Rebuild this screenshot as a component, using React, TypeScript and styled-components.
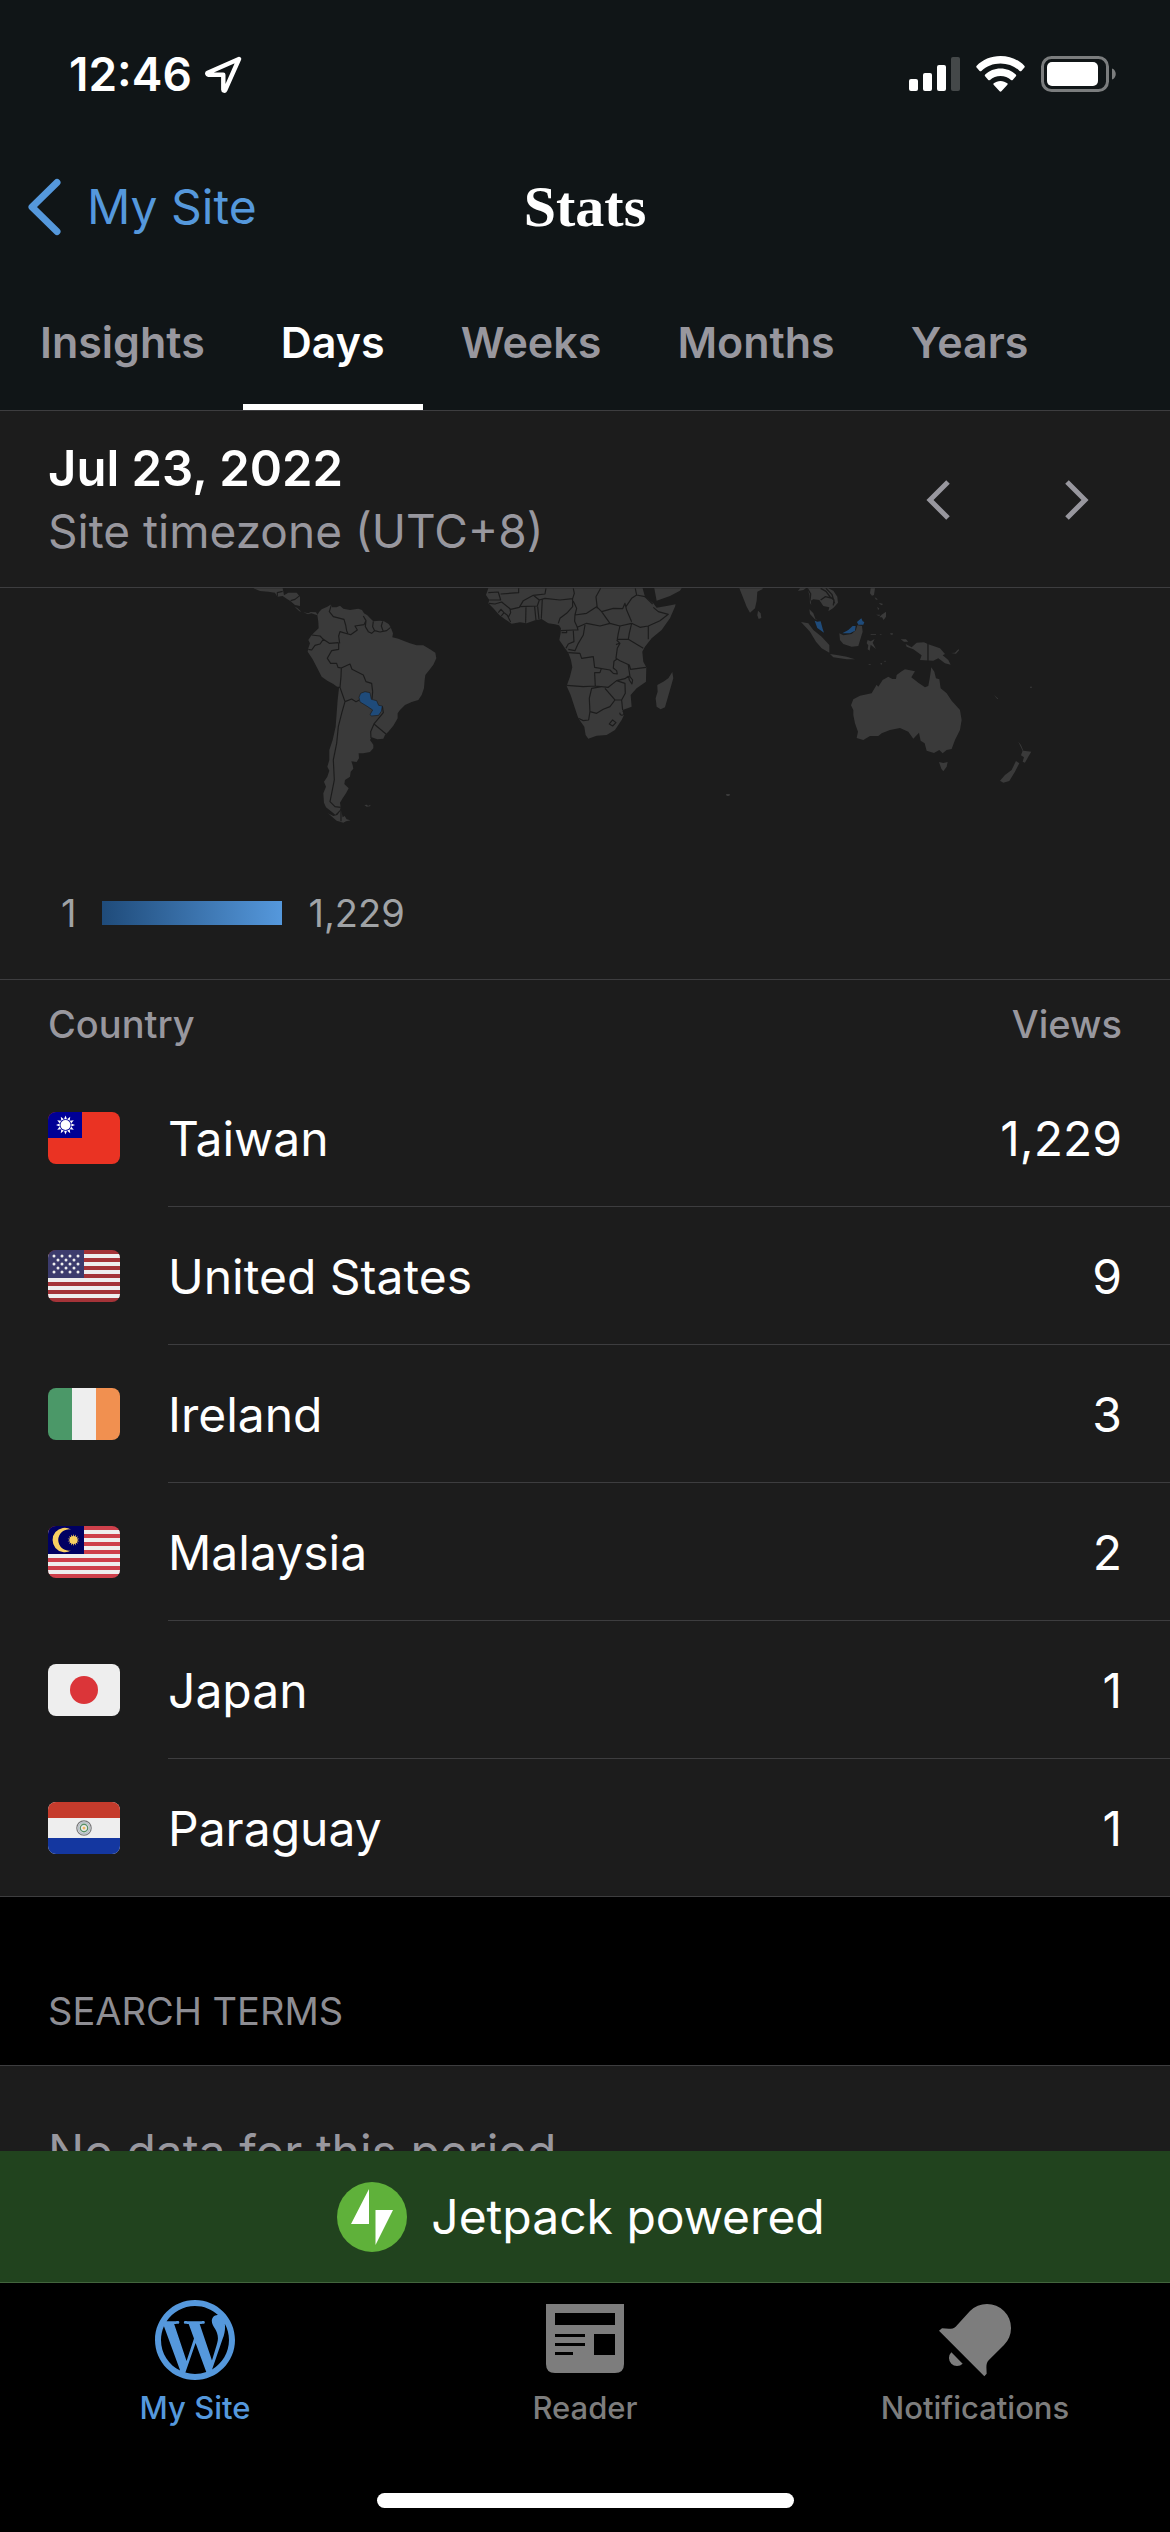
import React from "react";
import styled, { createGlobalStyle } from "styled-components";

const color = {
  header: "#101517",
  surface: "#1c1c1c",
  line: "#3d3d3f",
  muted: "#98979e",
  legend: "#a0a3a6",
  accent: "#5598dc",
  low: "#1f4b7a",
  land: "#3a3a3a",
  inactive: "#7d7d7d",
};

const GlobalStyle = createGlobalStyle`
  * { box-sizing: border-box; }
  body { margin: 0; background: #000; }
  button { font: inherit; color: inherit; background: none; border: 0; padding: 0; cursor: pointer; }
  a { color: inherit; text-decoration: none; }
  svg { display: block; flex: none; }
`;

const Screen = styled.div`
  display: flex;
  flex-direction: column;
  height: 100vh;
  background: #000;
  color: #fff;
  font-family: Inter, "Liberation Sans", sans-serif;
  font-size: 48px;
  line-height: 62px;
`;

const Header = styled.header`
  background: ${color.header};
  border-bottom: 1px solid ${color.line};
`;

const StatusBar = styled.div`
  display: flex;
  align-items: center;
  justify-content: space-between;
  padding: 43px 54px 36px 69px;
  font-size: 46px;
  font-weight: 600;
`;

const StatusGroup = styled.div<{ $gap: number }>`
  display: flex;
  align-items: center;
  gap: ${(p) => p.$gap}px;
`;

const NavBar = styled.div`
  display: grid;
  grid-template-columns: 1fr auto 1fr;
  align-items: center;
  height: 132px;
  padding: 0 27px;
`;

const BackLink = styled.a`
  display: flex;
  align-items: center;
  gap: 24px;
  color: ${color.accent};
`;

const Title = styled.h1`
  margin: 0;
  font: 700 58px/62px "Liberation Serif", serif;
`;

const Tabs = styled.nav`
  display: flex;
  padding-left: 2px;
`;

const Tab = styled.button<{ $active?: boolean }>`
  height: 137px;
  padding: 0 38px;
  font-size: 43px;
  font-weight: 600;
  color: ${(p) => (p.$active ? "#fff" : color.muted)};
  box-shadow: ${(p) => (p.$active ? "inset 0 -6px #fff" : "none")};
`;

const DateBar = styled.section`
  display: flex;
  align-items: center;
  justify-content: space-between;
  padding: 27px 81px 25px 48px;
  background: ${color.surface};
  border-bottom: 1px solid ${color.line};
`;

const DateText = styled.h2`
  margin: 0;
  font-size: 49px;
  line-height: 62px;
  font-weight: 600;
`;

const Note = styled.p<{ $large?: boolean }>`
  margin: 0;
  font-size: ${(p) => (p.$large ? 48 : 46)}px;
  color: ${color.muted};
`;

const Pager = styled.div`
  display: flex;
  gap: 115px;
`;

const Content = styled.main`
  flex: 1;
  min-height: 0;
  overflow-y: auto;
  scrollbar-width: none;
`;

const MapPanel = styled.section`
  background: ${color.surface};
  border-bottom: 1px solid ${color.line};
`;

const WorldMap = styled.svg`
  width: 100%;
  height: auto;
`;

const Legend = styled.div`
  display: flex;
  align-items: center;
  gap: 26px;
  padding: 0 61px 41px;
  font-size: 38px;
  line-height: 50px;
  color: ${color.legend};
`;

const LegendScale = styled.div`
  width: 180px;
  height: 24px;
  background: linear-gradient(90deg, ${color.low}, ${color.accent});
`;

const CountryTable = styled.table`
  width: 100%;
  border-spacing: 0;
  background: ${color.surface};
  border-bottom: 1px solid ${color.line};

  tbody tr:last-child td { border-bottom: 0; height: 137px; }
`;

const HeadCell = styled.th<{ $end?: boolean }>`
  height: 89px;
  padding: 0 48px 2px;
  font-size: 38px;
  font-weight: 500;
  text-align: ${(p) => (p.$end ? "right" : "left")};
  color: ${color.muted};
`;

const FlagCell = styled.td`
  width: 168px;
  padding: 0 48px;
`;

const Cell = styled.td<{ $end?: boolean }>`
  height: 138px;
  padding: 2px ${(p) => (p.$end ? 48 : 0)}px 0 0;
  border-bottom: 1px solid ${color.line};
  text-align: ${(p) => (p.$end ? "right" : "left")};
`;

const FlagFrame = styled.svg`
  width: 72px;
  height: 52px;
  border-radius: 8px;
`;

const SectionTitle = styled.h2`
  margin: 0;
  padding: 89px 48px 29px;
  font-size: 38px;
  line-height: 50px;
  font-weight: 400;
  color: #8d8d93;
`;

const EmptyPanel = styled.section`
  padding: 55px 48px;
  background: ${color.surface};
  border-top: 1px solid ${color.line};
`;

const Banner = styled.button`
  display: flex;
  align-items: center;
  justify-content: center;
  gap: 24px;
  width: 100%;
  height: 132px;
  padding-right: 8px;
  background: #21431e;
  border-bottom: 1px solid #42643d;
`;

const BottomBar = styled.footer`
  padding-bottom: 24px;
  background: #000;
`;

const BottomTabs = styled.nav`
  display: grid;
  grid-template-columns: repeat(3, 1fr);
  padding: 17px 0 67px;
`;

const BottomTab = styled.a<{ $active?: boolean }>`
  display: flex;
  flex-direction: column;
  align-items: center;
  gap: 10px;
  font-size: 31px;
  line-height: 36px;
  font-weight: 500;
  color: ${(p) => (p.$active ? color.accent : color.inactive)};
`;

const HomeIndicator = styled.div`
  width: 417px;
  height: 15px;
  margin: 0 auto;
  border-radius: 8px;
  background: #fff;
`;

const LocationIcon = () => (
  <svg width="37" height="37" viewBox="0 0 37 37" fill="none" stroke="#fff" strokeWidth="4.400" strokeLinejoin="round">
    <path d="M34 3 2.800 16.800a1 1 0 0 0 .4 1.900L18.300 18.700v15a1 1 0 0 0 1.900.4Z" />
  </svg>
);

const SignalIcon = () => (
  <svg width="51" height="36" viewBox="0 0 51 36" fill="#fff">
    <rect x="0" y="23" width="9" height="12" rx="2" />
    <rect x="14" y="17" width="9" height="18" rx="2" />
    <rect x="28" y="9" width="9" height="26" rx="2" />
    <rect x="42" y="1" width="9" height="34" rx="2" opacity=".22" />
  </svg>
);

const WifiIcon = () => (
  <svg width="49" height="36" viewBox="0 0 49 36" fill="#fff">
    <path d="M24.500 0C34 0 42.500 3.700 48.300 9.700c.6.6.6 1.200.1 1.800l-3 3.400c-.5.5-1.200.5-1.800 0C38.500 10.200 32 7.500 24.500 7.500S10.500 10.200 5.400 14.900c-.6.5-1.300.5-1.800 0l-3-3.400c-.5-.6-.5-1.200.1-1.800C6.500 3.700 15 0 24.500 0Z" />
    <path d="M24.500 12.500c6 0 11.300 2.300 15.300 6.100.6.5.6 1.200.1 1.700l-3.200 3.600c-.5.500-1.100.5-1.700 0-2.900-2.500-6.500-4-10.500-4s-7.600 1.500-10.500 4c-.6.5-1.200.5-1.700 0l-3.200-3.600c-.5-.5-.5-1.200.1-1.700 4-3.800 9.300-6.100 15.300-6.100Z" />
    <path d="M24.500 24.900c2.600 0 5 .9 6.800 2.400.5.400.5 1 .1 1.500l-6 6.500c-.5.600-1.300.6-1.800 0l-6-6.500c-.4-.5-.4-1.100.1-1.500 1.800-1.500 4.200-2.400 6.800-2.400Z" />
  </svg>
);

const BatteryIcon = () => (
  <svg width="75" height="36" viewBox="0 0 75 36">
    <rect x="1.500" y="1.500" width="65" height="33" rx="9" fill="none" stroke="#7b7d7e" strokeWidth="3" />
    <rect x="6" y="6" width="51" height="24" rx="5" fill="#fff" />
    <path d="M71 12.500c5 1.500 5 9.500 0 11Z" fill="#7b7d7e" />
  </svg>
);

const BackIcon = () => (
  <svg width="36" height="58" viewBox="0 0 36 58" fill="none" stroke="currentColor" strokeWidth="7" strokeLinecap="round" strokeLinejoin="round">
    <path d="M30 4.500 5 29 30 53.500" />
  </svg>
);

const PagerIcon = ({ next }: { next?: boolean }) => (
  <svg width="24" height="40" viewBox="0 0 24 40" fill="none" stroke={color.muted} strokeWidth="5">
    <path d={next ? "M2 2 20 20 2 38" : "M22 2 4 20 22 38"} />
  </svg>
);

const JetpackIcon = () => (
  <svg width="70" height="70" viewBox="0 0 70 70">
    <circle cx="35" cy="35" r="35" fill="#5fb13a" />
    <path d="M32 7v35H14ZM38.500 28H56L38.500 63Z" fill="#fff" />
  </svg>
);

const WordPressIcon = () => (
  <svg width="80" height="80" viewBox="2 2 20 20" fill="currentColor">
    <path d="M12 2C6.486 2 2 6.486 2 12s4.486 10 10 10 10-4.486 10-10S17.514 2 12 2zM3.500 12c0-1.232.264-2.402.736-3.460L8.290 19.650C5.456 18.272 3.500 15.365 3.500 12zm8.500 8.500c-.834 0-1.640-.120-2.400-.345l2.550-7.410 2.613 7.157c.017.042.038.080.060.117-.884.310-1.833.480-2.823.480zm1.172-12.485c.512-.027.973-.080.973-.080.458-.055.404-.728-.054-.702 0 0-1.376.108-2.265.108-.835 0-2.240-.107-2.240-.107-.458-.026-.510.674-.053.700 0 0 .434.055.892.082l1.324 3.630-1.860 5.578-3.096-9.208c.512-.027.973-.080.973-.080.458-.055.403-.728-.055-.702 0 0-1.376.108-2.265.108-.160 0-.347-.003-.547-.010C6.418 5.025 9.030 3.500 12 3.500c2.213 0 4.228.846 5.740 2.232-.037-.002-.072-.007-.110-.007-.835 0-1.427.727-1.427 1.510 0 .700.404 1.292.835 1.993.323.566.700 1.293.700 2.344 0 .727-.280 1.572-.646 2.748l-.848 2.833-3.072-9.138zm3.100 11.332l2.597-7.506c.484-1.212.645-2.180.645-3.044 0-.313-.020-.603-.057-.874.664 1.210 1.042 2.600 1.042 4.078 0 3.136-1.700 5.874-4.227 7.347z" />
  </svg>
);

const ReaderIcon = () => (
  <svg width="80" height="80" viewBox="-1 0 80 80" fill="currentColor">
    <path
      fillRule="evenodd"
      d="M0 4H78V64Q78 73 69 73H9Q0 73 0 64ZM9 13V25H69V13ZM9 34V37H39V34ZM9 43V46H39V43ZM9 52V55H27V52ZM48 34V55H69V34Z"
    />
  </svg>
);

const BellIcon = () => (
  <svg width="80" height="80" viewBox="225 119 240 240" fill="currentColor">
    <path d="M237 211 246 204C262 205 278 208 287 199L330 152A72 72 0 0 1 432 254L386 300C376 310 380 325 380 340L373 348Z" />
    <path d="M274 276A24 24 0 0 0 308 310Z" />
  </svg>
);

const TaiwanFlag = () => (
  <>
    <rect width="72" height="52" fill="#ea3323" />
    <rect width="34" height="26" fill="#000095" />
    <g transform="translate(17.500 13)" fill="#fff">
      {Array.from({ length: 12 }, (_, i) => (
        <path key={i} d="M-1.500 -5.800 0 -9.500 1.500 -5.800Z" transform={`rotate(${i * 30})`} />
      ))}
      <circle r="5" />
    </g>
  </>
);

const UsFlag = () => (
  <>
    <rect width="72" height="52" fill="#a43338" />
    {[4, 12, 20, 28, 36, 44].map((y) => (
      <rect key={y} y={y} width="72" height="4" fill="#eee" />
    ))}
    <rect width="36" height="28" fill="#3c3b6d" />
    {[6, 10, 14, 18, 22].map((y, row) =>
      (row % 2 ? [10, 18, 26] : [6, 14, 22, 30]).map((x) => (
        <circle key={`${x}-${y}`} cx={x} cy={y} r="1.500" fill="#eee" />
      )),
    )}
  </>
);

const IrelandFlag = () => (
  <>
    <rect width="24" height="52" fill="#4b9868" />
    <rect x="24" width="24" height="52" fill="#eee" />
    <rect x="48" width="24" height="52" fill="#f19050" />
  </>
);

const MalaysiaFlag = () => (
  <>
    <rect width="72" height="52" fill="#ce404b" />
    {[4, 12, 20, 28, 36, 44].map((y) => (
      <rect key={y} y={y} width="72" height="4" fill="#eee" />
    ))}
    <rect width="36" height="28" fill="#000062" />
    <path d="M23 3.500A12.200 12.200 0 1 0 23 24.500A10.700 10.700 0 1 1 23 3.500Z" fill="#f8cf62" />
    <g transform="translate(25.500 14)" fill="#f8cf62">
      {Array.from({ length: 14 }, (_, i) => (
        <path key={i} d="M-.8 -3 0 -6 .8 -3Z" transform={`rotate(${(i * 360) / 14})`} />
      ))}
      <circle r="3.800" />
    </g>
  </>
);

const JapanFlag = () => (
  <>
    <rect width="72" height="52" fill="#eee" />
    <circle cx="36" cy="26" r="14" fill="#db3539" />
  </>
);

const ParaguayFlag = () => (
  <>
    <rect width="72" height="52" fill="#eee" />
    <rect width="72" height="16" fill="#c53b2c" />
    <rect y="36" width="72" height="16" fill="#1437a0" />
    <g transform="translate(36 26)" fill="none">
      <circle r="7.200" stroke="#777" strokeWidth="1.200" />
      <circle r="5.600" stroke="#b9c0c8" strokeWidth="1.600" />
      <circle r="3.700" stroke="#5a8f67" strokeWidth="1.400" />
      <circle r="1.500" fill="#efb765" />
    </g>
  </>
);

const countries = [
  { name: "Taiwan", views: "1,229", Flag: TaiwanFlag },
  { name: "United States", views: "9", Flag: UsFlag },
  { name: "Ireland", views: "3", Flag: IrelandFlag },
  { name: "Malaysia", views: "2", Flag: MalaysiaFlag },
  { name: "Japan", views: "1", Flag: JapanFlag },
  { name: "Paraguay", views: "1", Flag: ParaguayFlag },
];

/* Western half of the map: the Americas, Africa and Arabia */
const westLand = [
  "M40 25 60 33 85 35 105 38 112 50 128 48 140 56 152 64 165 75 180 78 180 50 170 38 145 38 132 46 128 25Z",
  "M164 80 172 84 184 95 178 94Z",
  "M190 97 205 100 212 96 228 97 233 106 228 104 214 100 204 103Z",
  "M232 105 238 95 245 88 262 80 275 72 276 82 290 82 300 77 310 86 330 90 355 86 366 90 372 100 382 106 392 116 400 124 420 122 432 124 446 132 452 142 459 160 457 172 475 176 490 182 510 190 530 196 550 196 570 208 586 218 589 235 580 254 568 270 556 285 554 300 552 325 545 345 535 360 515 366 495 375 480 390 473 400 473 415 460 437 445 455 435 465 430 476 412 478 395 472 390 480 400 494 400 505 390 516 370 520 356 520 357 535 350 546 334 544 338 556 340 566 332 575 330 590 315 600 313 612 326 625 318 640 308 655 300 668 302 682 300 690 286 704 275 695 258 682 252 668 250 640 258 620 252 605 262 590 268 572 262 560 268 540 268 510 278 480 287 440 290 400 293 360 297 325 280 312 262 302 245 290 232 265 218 238 203 215 205 205 210 190 205 180 215 165 225 155 236 145 235 125Z",
  "M264 700 280 708 292 705 303 690 308 712 314 708 320 718 332 721 318 724 310 728 290 722Z",
  "M373 675 381 674 384 678 392 674 390 679 380 680Z",
  "M745 25 738 45 748 60 745 70 760 85 778 105 795 118 815 131 840 127 860 130 885 121 905 117 925 130 945 133 957 136 963 145 962 160 958 180 975 205 985 218 993 240 997 262 990 290 980 318 992 345 1005 385 1015 415 1033 440 1037 465 1045 476 1070 467 1100 465 1125 450 1145 420 1152 405 1148 390 1175 380 1172 345 1190 325 1218 305 1219 262 1210 245 1207 215 1215 200 1235 175 1265 150 1290 115 1305 80 1307 73 1280 78 1250 83 1240 70 1215 50 1208 25Z",
  "M1243 25 1250 62 1290 48 1320 32 1325 25Z",
  "M1297 276 1300 295 1290 330 1275 382 1262 388 1250 380 1247 355 1253 335 1252 315 1270 305 1285 295Z",
];

const westBorders = [
  "M112 50 112 38 128 34M136 25V38M152 62 165 58 180 46",
  "M275 72 268 95 280 110 312 118 317 135 320 152 324 162 300 155 296 168 299 190",
  "M324 162 332 164 352 150 345 138 372 134 378 122 370 108",
  "M378 122 376 140 385 155 395 160 404 152 420 156 440 152 452 142M400 124 398 140 404 152M428 124 424 138 430 155",
  "M215 165 240 168 250 178 240 192 225 196 215 210 205 208M250 178 268 190 296 188",
  "M296 190 296 208 275 212 262 235 272 250 290 250 294 262 304 264 330 252 336 268 370 285 378 305 395 310 398 335",
  "M304 264 303 290 300 322 308 345 315 365 335 357 348 365 358 360M315 365 305 400 295 440 290 490 280 540 283 600 275 640 270 665 285 680 302 682M290 322 300 322M303 690V724",
  "M398 335 396 358M427 378 430 398 402 432 438 462M402 432 392 455 393 475",
  "M745 38 775 36 782 60 748 60M747 70 765 72 785 66 810 86 812 98 805 112M782 42 836 38V25M775 98 783 88 792 98 784 108M792 98 802 106 812 126",
  "M785 66 812 88 838 82 850 62 880 46 898 60 892 78 838 80M880 46 915 42 918 25M858 82 857 128M884 80 888 120M893 80 897 117M907 58 904 116",
  "M898 60 915 55 960 60 998 56 1003 40 1000 25M998 58 998 80 980 100 960 115 955 130M1000 64 1010 85 1005 105 1040 100 1070 80 1085 95 1110 130 1080 138 1040 130 1012 142 1004 124 1005 105",
  "M963 152 1000 150 1014 150 1012 142M965 158 980 158V152M1000 152 1002 185 985 192 978 205M1035 135 1030 165 1015 190 1005 212 985 208",
  "M1082 25 1068 50 1072 85M1085 95 1120 85 1148 86 1155 70 1160 90 1175 125M1110 130 1140 138 1175 130 1200 142 1225 138 1260 122 1285 103 1255 95 1240 82M1158 80 1175 55 1190 45 1215 50 1238 72M1186 25 1190 45",
  "M1225 138V178M1140 138 1135 160 1132 178 1165 178 1210 205M1175 130 1168 160 1165 178M1130 180 1140 190 1132 205 1128 235 1140 242 1168 255 1172 268 1218 262M1128 194 1138 190",
  "M1165 255 1170 290 1178 300 1176 312 1168 300 1166 288M985 218 1020 220 1025 235 1060 230 1064 262 1110 270 1120 280 1132 282 1130 272 1120 264 1122 244 1130 238M1084 266 1080 278 1064 278 1066 318",
  "M980 316 1030 320 1066 318 1105 322 1130 302 1155 296 1166 288M1085 320 1055 325 1048 355 1050 395 1046 420 1030 422 1015 415M1050 395 1070 400 1090 388 1110 380 1125 360 1095 325M1125 360 1145 360 1156 340 1155 310 1130 302M1145 360 1148 390M1140 398A6 6 0 1 0 1148 394M1108 432 1118 420 1128 428 1118 438Z",
];

/* Eastern half of the map: South-East Asia and Oceania */
const eastLand = [
  "M118 25 130 55 140 80 150 98 165 85 170 62 172 35 188 27V25Z",
  "M174 92 182 100 184 114 176 117 172 106Z",
  "M294 33 300 25H318L310 30Z",
  "M322 25H385L400 32 412 50 414 68 400 84 385 94 388 82 370 78 358 60 340 58 332 62 334 76 330 68 328 44Z",
  "M328 88 340 100 346 116 354 121 344 117 330 102Z",
  "M303 126 325 130 340 150 365 170 388 195V218L365 205 348 185 330 155Z",
  "M390 222 415 226 440 230 465 238 440 238 400 232Z",
  "M418 160 430 166 455 162 468 150 472 136 486 138 488 155 482 175 475 198 455 200 430 192 420 180Z",
  "M503 180 512 184 524 177 518 188 528 207 512 194 509 212 503 208 505 196 500 190Z",
  "M512 25H525L522 45 516 47 510 40Z",
  "M524 52 534 58 528 59ZM536 68 550 72 544 76ZM532 80 538 86 534 90ZM528 104H540L538 108Z",
  "M545 104 558 95V110L551 120 546 112 538 112Z",
  "M512 163H528V165H512ZM538 163 544 162V165ZM571 160 579 160 577 165 571 163ZM506 252H512V254H506ZM540 251 547 248 545 254ZM551 243 558 242 556 246Z",
  "M602 178 618 178 625 185 612 185Z",
  "M617 192 635 202 650 188 672 187 685 193 720 205 735 222 728 226 745 240 752 254 735 250 715 235 700 242 660 240 665 226 640 208 620 200Z",
  "M753 219 765 218 775 208 778 210 768 221Z",
  "M694 262 703 275 708 295 718 298 722 325 740 340 755 362 780 390 785 420 780 450 765 480 755 507 740 510 728 520 718 510 702 519 680 512 674 490 662 482 657 458 640 476 625 455 600 444 570 450 545 460 535 468 510 468 490 480 470 474 474 455 465 430 460 405 460 390 453 376 460 358 480 347 515 340 530 314 535 320 548 300 565 290 577 297 588 297 590 285 603 275 615 268 645 274 634 292 655 308 675 322 685 318 690 290Z",
  "M717 546 730 549 743 546 740 560 730 574 724 566Z",
  "M948 543 958 550 945 575 928 603 910 608 900 602 915 585 935 570Z",
  "M955 485 963 495 970 512 994 515 985 530 975 548 968 545 972 532 963 526 968 512Z",
  "M882 345 895 356 892 357ZM990 320H996V323H990Z",
  "M78 642 90 642 88 648 80 648Z",
];

const MapDrawing = () => (
  <WorldMap viewBox="0 588 1170 300" role="img" aria-label="Map of views by country">
    <g transform="translate(240 580) scale(.3333)">
      <path d={westLand.join("")} fill={color.land} />
      <path d={westBorders.join("")} fill="none" stroke={color.surface} strokeWidth="3.500" strokeLinejoin="round" />
      <path
        d="M362 340 375 335 390 338 394 358 410 362 416 376 427 378 424 394 416 406 395 408 390 404 398 390 380 378 360 366 357 352Z"
        fill={color.low}
        stroke={color.surface}
        strokeWidth="2"
      />
    </g>
    <g transform="translate(700 580) scale(.3333)">
      <path d={eastLand.join("")} fill={color.land} />
      <path
        d="M684 190V245M362 25 378 34 390 50 402 60 400 76M362 60 376 50 394 54M378 25 396 44 404 70M322 25 332 42 330 62"
        fill="none"
        stroke={color.surface}
        strokeWidth="4"
      />
      <path
        d="M344 122 352 125 362 124 368 146 372 158 352 144ZM427 160 445 150 458 138 467 138 465 152 450 160ZM471 126 484 115 488 124 493 126 490 134 475 134Z"
        fill={color.low}
      />
    </g>
  </WorldMap>
);

const tabs = ["Insights", "Days", "Weeks", "Months", "Years"];

export default function App() {
  return (
    <Screen>
      <GlobalStyle />
      <Header>
        <StatusBar>
          <StatusGroup $gap={13}>
            12:46
            <LocationIcon />
          </StatusGroup>
          <StatusGroup $gap={16}>
            <SignalIcon />
            <WifiIcon />
            <BatteryIcon />
          </StatusGroup>
        </StatusBar>
        <NavBar>
          <BackLink href="#my-site">
            <BackIcon />
            My Site
          </BackLink>
          <Title>Stats</Title>
        </NavBar>
        <Tabs>
          {tabs.map((tab) => (
            <Tab key={tab} $active={tab === "Days"}>
              {tab}
            </Tab>
          ))}
        </Tabs>
      </Header>
      <DateBar>
        <div>
          <DateText>Jul 23, 2022</DateText>
          <Note>Site timezone (UTC+8)</Note>
        </div>
        <Pager>
          <button aria-label="Previous day">
            <PagerIcon />
          </button>
          <button aria-label="Next day">
            <PagerIcon next />
          </button>
        </Pager>
      </DateBar>
      <Content>
        <MapPanel>
          <MapDrawing />
          <Legend>
            <span>1</span>
            <LegendScale />
            <span>1,229</span>
          </Legend>
        </MapPanel>
        <CountryTable>
          <thead>
            <tr>
              <HeadCell colSpan={2}>Country</HeadCell>
              <HeadCell $end>Views</HeadCell>
            </tr>
          </thead>
          <tbody>
            {countries.map(({ name, views, Flag }) => (
              <tr key={name}>
                <FlagCell>
                  <FlagFrame viewBox="0 0 72 52" aria-hidden="true">
                    <Flag />
                  </FlagFrame>
                </FlagCell>
                <Cell>{name}</Cell>
                <Cell $end>{views}</Cell>
              </tr>
            ))}
          </tbody>
        </CountryTable>
        <SectionTitle>SEARCH TERMS</SectionTitle>
        <EmptyPanel>
          <Note $large>No data for this period</Note>
        </EmptyPanel>
      </Content>
      <Banner>
        <JetpackIcon />
        Jetpack powered
      </Banner>
      <BottomBar>
        <BottomTabs>
          <BottomTab href="#my-site" $active>
            <WordPressIcon />
            My Site
          </BottomTab>
          <BottomTab href="#reader">
            <ReaderIcon />
            Reader
          </BottomTab>
          <BottomTab href="#notifications">
            <BellIcon />
            Notifications
          </BottomTab>
        </BottomTabs>
        <HomeIndicator />
      </BottomBar>
    </Screen>
  );
}
